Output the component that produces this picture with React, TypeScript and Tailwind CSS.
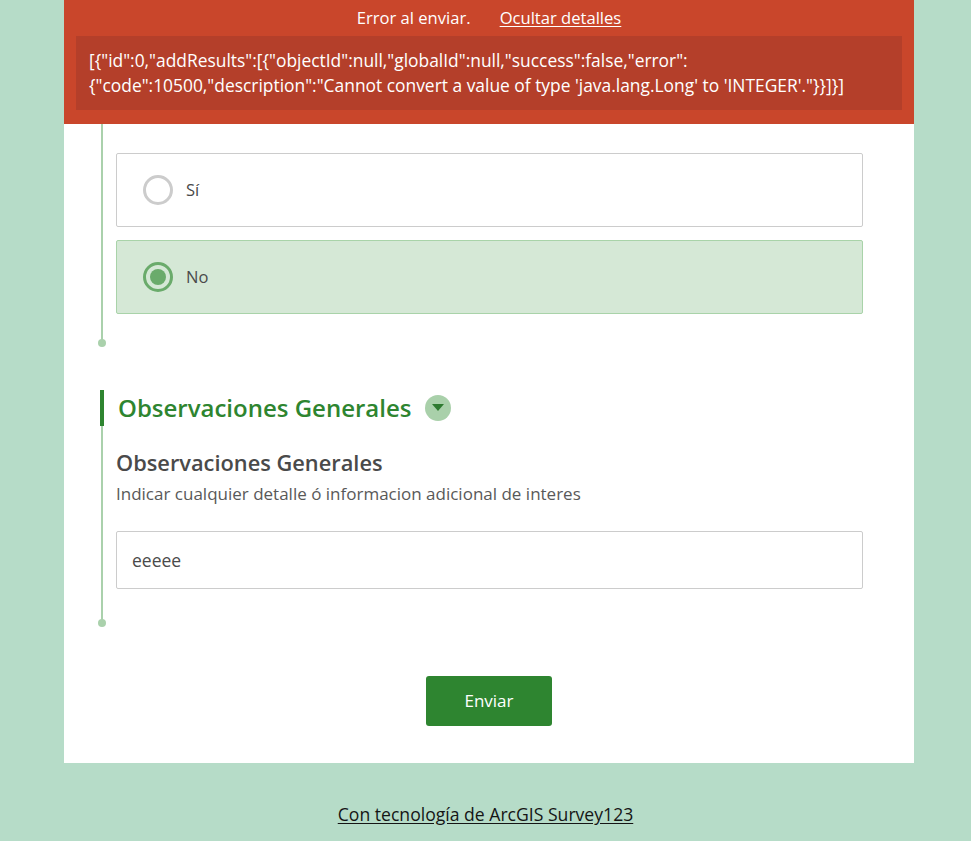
import { useState } from "react";

const font = { fontFamily: '"Open Sans", "Lato", sans-serif' };

/** Raya vertical del grupo con su punto final. */
function GroupLine({ children, className = "" }: { children: React.ReactNode; className?: string }) {
  return (
    <div className={`relative ml-[37px] border-l-2 border-[#aad1ac] pl-[13px] ${className}`}>
      {children}
      <span className="absolute -bottom-[4px] -left-[5px] h-[8px] w-[8px] rounded-full bg-[#aad1ac]" />
    </div>
  );
}

function RadioRow({ label, checked, onClick }: { label: string; checked: boolean; onClick: () => void }) {
  return (
    <button
      type="button"
      onClick={onClick}
      className={`flex h-[74px] w-[747px] items-center gap-[13px] rounded-[2px] border pl-[26px] text-left text-[16.5px] text-[#4a4a4a] ${
        checked ? "border-[#a9d3a9] bg-[#d5e8d6]" : "border-[#cccccc] bg-white"
      }`}
      style={font}
    >
      {checked ? (
        <span className="flex h-[30px] w-[30px] items-center justify-center rounded-full border-[3px] border-[#6aab6b]">
          <span className="h-[16px] w-[16px] rounded-full bg-[#6aab6b]" />
        </span>
      ) : (
        <span className="h-[30px] w-[30px] rounded-full border-[3px] border-[#cccccc]" />
      )}
      <span>{label}</span>
    </button>
  );
}

export default function App() {
  const [answer, setAnswer] = useState("No");
  const [obs, setObs] = useState("eeeee");

  return (
    <div className="min-h-[841px] w-full bg-[#b6dcc8]" style={font}>
      <div className="relative ml-[64px] w-[850px] bg-white pb-[37px]">
        {/* Banner de error sobre el formulario */}
        <div className="absolute left-0 right-0 top-0 z-10 h-[124px] bg-[#c9462b] px-[12px] pt-[7px] text-white">
          <div className="flex h-[22px] items-center justify-center gap-[29px] text-[16.6px]">
            <span>Error al enviar.</span>
            <a href="#" className="underline underline-offset-2">Ocultar detalles</a>
          </div>
          <div className="mt-[7px] h-[74px] bg-[#b43f2a] px-[13px] pt-[12px] text-[17.4px] leading-[25px]">
            <span className="block">{'[{"id":0,"addResults":[{"objectId":null,"globalId":null,"success":false,"error":'}</span>
            <span className="block">{'{"code":10500,"description":"Cannot convert a value of type \'java.lang.Long\' to \'INTEGER\'."}}]}]'}</span>
          </div>
        </div>

        <GroupLine className="pb-[29px] pt-[103px]">
          <p className="h-[22px] pl-[211px] text-[17px] leading-[22px] text-[#595959]">
            Indique si la encuesta se registró en el lugar de la visita
          </p>
          <div className="mt-[28px] flex flex-col gap-[13px]">
            <RadioRow label="Sí" checked={answer === "Sí"} onClick={() => setAnswer("Sí")} />
            <RadioRow label="No" checked={answer === "No"} onClick={() => setAnswer("No")} />
          </div>
        </GroupLine>

        <div className="ml-[36px] mt-[47px] flex h-[36px] items-center gap-[13px] border-l-4 border-[#2e8530] pl-[14px]">
          <h2 className="text-[24px] font-semibold text-[#2e8530]">Observaciones Generales</h2>
          <span className="flex h-[26px] w-[26px] items-center justify-center rounded-full bg-[#a9d0aa]">
            <svg width="12" height="8" viewBox="0 0 12 8">
              <path d="M0 0 L12 0 L6 7 Z" fill="#2e7a30" />
            </svg>
          </span>
        </div>

        <GroupLine className="pb-[34px] pt-[22px]">
          <h3 className="text-[21.8px] font-semibold leading-[30px] text-[#4a4a4a]">Observaciones Generales</h3>
          <p className="mt-[6px] text-[17px] leading-[20px] text-[#595959]">
            Indicar cualquier detalle ó informacion adicional de interes
          </p>
          <input
            value={obs}
            onChange={(e) => setObs(e.target.value)}
            className="mt-[27px] block h-[58px] w-[747px] rounded-[2px] border border-[#cccccc] px-[15px] text-[17.5px] text-[#4a4a4a] outline-none"
            style={font}
          />
        </GroupLine>

        <div className="mt-[53px] flex justify-center">
          <button
            type="button"
            className="h-[50px] w-[126px] rounded-[3px] bg-[#2e8530] text-[17px] text-white"
            style={font}
          >
            Enviar
          </button>
        </div>
      </div>

      <div className="flex justify-center pt-[38px]">
        <a href="#" className="text-[17.6px] text-[#151515] underline underline-offset-2">
          Con tecnología de ArcGIS Survey123
        </a>
      </div>
    </div>
  );
}
